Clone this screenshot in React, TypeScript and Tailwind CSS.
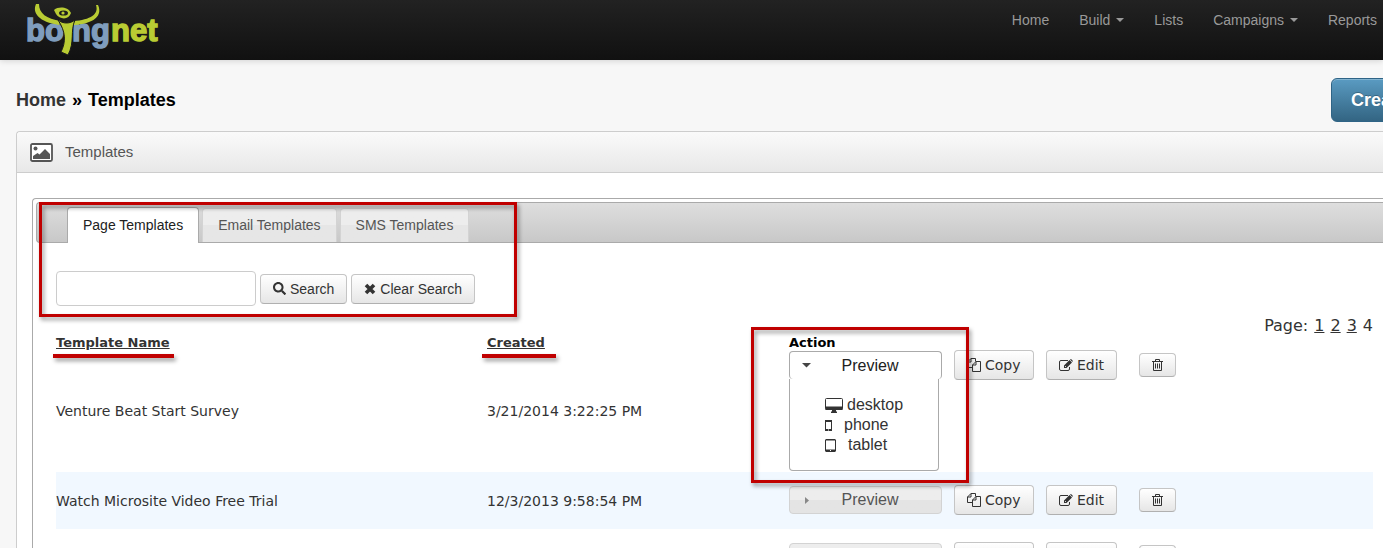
import { useState } from "react";
import type { ReactNode } from "react";
import { FaSearch } from "react-icons/fa";

// ─── Data ─────────────────────────────────────────────────────────────────────

const NAV = [
    { label: "Home", menu: false },
    { label: "Build", menu: true },
    { label: "Lists", menu: false },
    { label: "Campaigns", menu: true },
    { label: "Reports", menu: false },
];

const TABS = ["Page Templates", "Email Templates", "SMS Templates"];

const TEMPLATES = [
    { name: "Venture Beat Start Survey", created: "3/21/2014 3:22:25 PM" },
    { name: "Watch Microsite Video Free Trial", created: "12/3/2013 9:58:54 PM" },
    { name: "", created: "" },
];

// ─── Icons ────────────────────────────────────────────────────────────────────

function Logo() {
    return (
        <svg width="140" height="56" viewBox="0 0 140 56" role="img" aria-label="boingnet">
            <g fontFamily="'Liberation Sans', sans-serif" fontWeight="700" fontSize="31" strokeWidth="1.4">
                <text x="1" y="41" fill="#7f9dbd" stroke="#7f9dbd">bo</text>
                <text x="47" y="41" fill="#7f9dbd" stroke="#7f9dbd">ng</text>
                <text x="86" y="41" fill="#b9cc33" stroke="#b9cc33">net</text>
            </g>
            <g fill="#b9cc33">
                <path d="M11 4 C7 13 14 22 34 25 L36 21 C21 19 14 13 14 4 Z" />
                <path d="M71 5 C74 14 66 20 48 21 L46 25 C64 25 79 18 73 5 Z" />
                <path d="M33 20 C38 24 45 24 50 20 C45 31 50 42 43 55 L36 52 C41 42 41 32 33 20 Z" stroke="#1a1a1a" strokeWidth="1" />
                <path d="M29 10 C34 6 43 7 46 13 C44 20 35 20 31 14 Z" />
            </g>
            <ellipse cx="38.5" cy="13" rx="4.5" ry="2.6" fill="#1d1d1d" />
            <circle cx="38" cy="13" r="1.6" fill="#b9cc33" />
        </svg>
    );
}

function PictureIcon() {
    return (
        <svg width="23" height="19" viewBox="0 0 23 19" aria-hidden="true">
            <rect x="1" y="1" width="21" height="17" rx="1.5" fill="#fff" stroke="#555" strokeWidth="1.8" />
            <circle cx="5.5" cy="5.5" r="2" fill="#555" />
            <path d="M3 16 V13 L7.5 10 L9.5 11.5 L15 6 L20 11 V16 Z" fill="#555" />
        </svg>
    );
}

function CrossIcon() {
    return (
        <svg width="12" height="12" viewBox="0 0 12 12" aria-hidden="true">
            <path d="M2 2 L10 10 M10 2 L2 10" stroke="#333" strokeWidth="3.6" />
        </svg>
    );
}

function CopyIcon() {
    return (
        <svg width="14" height="14" viewBox="0 0 14 14" fill="none" stroke="#333" strokeWidth="1" aria-hidden="true">
            <path d="M5.5 9.5 H0.5 V4 L4 0.5 H8.5 V3.5 M4 0.5 V4 H0.5" />
            <path d="M5.5 13.5 V7 L9 3.5 H13.5 V13.5 Z M9 3.5 V7 H5.5" />
        </svg>
    );
}

function EditIcon() {
    return (
        <svg width="14" height="12" viewBox="0 0 14 12" aria-hidden="true">
            <path d="M9 1.5 H2 Q0.5 1.5 0.5 3 V10 Q0.5 11.5 2 11.5 H9 Q10.5 11.5 10.5 10 V8" fill="none" stroke="#333" />
            <path d="M5 9 V6.5 L10.5 1 L13 3.5 L7.5 9 Z M11 0.5 L12 0 L13.8 1.8 L13.4 3 Z" fill="#333" />
            <path d="M6 7 L7 8" stroke="#fff" strokeWidth="0.8" />
        </svg>
    );
}

function TrashIcon() {
    return (
        <svg width="11" height="12" viewBox="0 0 11 12" fill="none" stroke="#333" strokeWidth="1" aria-hidden="true">
            <path d="M0 2.5 H11 M3.5 2.5 V0.5 H7.5 V2.5 M1.5 2.5 V11.5 H9.5 V2.5 M3.5 4.5 V9.5 M5.5 4.5 V9.5 M7.5 4.5 V9.5" />
        </svg>
    );
}

function DesktopIcon() {
    return (
        <svg width="18" height="15" viewBox="0 0 18 15" aria-hidden="true">
            <rect x="0.5" y="0.5" width="17" height="11" rx="1" fill="#fff" stroke="#333" />
            <path d="M0.5 8.5 H17.5 V12 H11 V13 L12 14 V15 H6 V14 L7 13 V12 H0.5 Z" fill="#333" />
        </svg>
    );
}

function PhoneIcon() {
    return (
        <svg width="7" height="11" viewBox="0 0 7 11" aria-hidden="true">
            <path d="M0 0 H7 V11 H0 Z M1 2 V9 H6 V2 Z" fill="#333" fillRule="evenodd" />
            <rect x="3" y="9.5" width="1" height="1" fill="#fff" />
        </svg>
    );
}

function TabletIcon() {
    return (
        <svg width="11" height="13" viewBox="0 0 11 13" aria-hidden="true">
            <path d="M1 0 H10 L11 1 V12 L10 13 H1 L0 12 V1 Z M1 1.5 V10.5 H10 V1.5 Z" fill="#333" fillRule="evenodd" />
            <rect x="5" y="11" width="1" height="1" fill="#fff" />
        </svg>
    );
}

// ─── Pieces ───────────────────────────────────────────────────────────────────

const BTN = "inline-flex items-center justify-center rounded border border-[#c5c5c5] border-b-[#b0b0b0] bg-linear-to-b from-white to-[#e6e6e6] text-[#333]";

function TextButton({ children }: { children: ReactNode }) {
    return (
        <button type="button" className={`${BTN} h-[30px] gap-1 px-3`}>
            {children}
        </button>
    );
}

// Red markers laid over the page
const MARK = "pointer-events-none absolute h-1 bg-[#c00000] shadow-[2px_3px_4px_rgba(0,0,0,0.4)]";
const MARK_BOX = "pointer-events-none absolute border-3 border-[#c00000] drop-shadow-[2px_3px_2px_rgba(0,0,0,0.4)]";

function Preview({ open, onToggle }: { open: boolean; onToggle: () => void }) {
    return (
        <div className="w-[153px] font-['Liberation_Sans',sans-serif] text-base">
            <button type="button" onClick={onToggle} aria-expanded={open}
                className={open
                    ? "flex h-7 w-full items-center rounded border border-b-0 border-[#aaa] bg-white px-3 text-[#212121]"
                    : "flex h-7 w-full items-center rounded border border-[#d3d3d3] bg-linear-to-b from-[#ededed] from-50% to-[#e4e4e4] to-50% px-3 text-[#555]"}>
                <svg width="9" height="9" viewBox="0 0 9 9" aria-hidden="true">
                    {open
                        ? <path d="M0 2 H9 L4.5 6.5 Z" fill="#444" />
                        : <path d="M3 1 V8 L7 4.5 Z" fill="#888" />}
                </svg>
                <span className="flex-1 text-center">Preview</span>
            </button>
            {open && (
                <ul className="h-[92px] w-[150px] rounded-b border border-t-0 border-[#aaa] bg-white pt-4 pl-[35px] leading-5 text-[#333]">
                    <li className="flex items-center gap-1"><DesktopIcon />desktop</li>
                    <li className="flex items-center gap-3"><PhoneIcon />phone</li>
                    <li className="flex items-center gap-3"><TabletIcon />tablet</li>
                </ul>
            )}
        </div>
    );
}

function TemplateTable() {
    const [openRow, setOpenRow] = useState(0);

    return (
        <table className="w-full table-fixed border-collapse text-left text-sm">
            <colgroup>
                <col className="w-[431px]" />
                <col className="w-[302px]" />
                <col className="w-[165px]" />
                <col className="w-[92px]" />
                <col className="w-[93px]" />
                <col />
            </colgroup>
            <thead className="text-[13px] leading-[14px]">
                <tr>
                    <th className="p-0 pt-0.5"><a href="#name" className="underline">Template Name</a></th>
                    <th className="p-0 pt-0.5"><a href="#created" className="underline">Created</a></th>
                    <th className="p-0 pt-0.5 text-black">Action</th>
                    <th colSpan={3} className="p-0" />
                </tr>
            </thead>
            <tbody>
                {TEMPLATES.map((t, i) => {
                    const pad = i === 0 ? "p-0 align-top" : "px-0 pt-[13px] pb-3.5 align-top";
                    return (
                        <tr key={i} className={i % 2 ? "bg-[#f1f8ff]" : ""}>
                            <td className="p-0">{t.name}</td>
                            <td className="p-0">{t.created}</td>
                            <td className={pad}>
                                <div className="py-px">
                                    <Preview open={openRow === i} onToggle={() => setOpenRow(openRow === i ? -1 : i)} />
                                </div>
                            </td>
                            <td className={pad}><TextButton><CopyIcon />Copy</TextButton></td>
                            <td className={pad}><TextButton><EditIcon />Edit</TextButton></td>
                            <td className={pad}>
                                <div className="flex h-[30px] items-center">
                                    <button type="button" aria-label="Delete" className={`${BTN} h-6 w-[37px]`}><TrashIcon /></button>
                                </div>
                            </td>
                        </tr>
                    );
                })}
            </tbody>
        </table>
    );
}

// ─── Page ─────────────────────────────────────────────────────────────────────

export default function App() {
    const [tab, setTab] = useState(0);

    return (
        <div className="h-screen overflow-hidden bg-[#f7f7f7] font-['Liberation_Sans',sans-serif] text-[#333]">
            <header className="flex h-[60px] justify-between bg-linear-to-b from-[#222] to-[#111] pr-1.5 pl-[25px] shadow-[0_1px_6px_rgba(0,0,0,0.15)]">
                <a href="#home"><Logo /></a>
                <nav className="flex gap-[30px] pt-2.5 text-sm leading-5 text-[#999]">
                    {NAV.map((n) => (
                        <a key={n.label} href="#nav" className="flex h-5 items-center gap-1.5">
                            {n.label}
                            {n.menu && (
                                <svg width="8" height="4" viewBox="0 0 8 4" aria-hidden="true"><path d="M0 0 H8 L4 4 Z" fill="#999" /></svg>
                            )}
                        </a>
                    ))}
                </nav>
            </header>

            <div className="flex h-[71px] items-center justify-between pt-2 pl-4">
                <h1 className="flex gap-1.5 text-lg font-bold text-black">
                    <a href="#home" className="text-[#333]">Home</a>
                    <span>»</span>
                    <span>Templates</span>
                </h1>
                <button type="button"
                    className="-mr-11 h-11 shrink-0 rounded-md border border-[#2f6486] bg-linear-to-b from-[#5a9bc2] to-[#336583] px-[19px] text-lg font-bold text-white shadow-[inset_0_1px_0_rgba(255,255,255,0.25)] text-shadow-[0_-1px_0_rgba(0,0,0,0.25)]">
                    Create
                </button>
            </div>

            <section className="ml-4 rounded-tl border-t border-l border-[#cdcdcd] bg-white">
                <div className="flex h-[41px] items-center gap-3 rounded-tl border-b border-[#cdcdcd] bg-linear-to-b from-[#fafafa] to-[#e8e8e8] pl-[13px]">
                    <PictureIcon />
                    <h2 className="text-[15px] text-[#555]">Templates</h2>
                </div>

                <div className="relative mt-[25px] ml-[15px] rounded-tl border-t border-l border-[#aaa] pt-[3px] pl-[3px]">
                    <div role="tablist" className="flex h-[41px] items-end gap-[3px] rounded-l border border-r-0 border-[#aaa] bg-linear-to-b from-[#dedede] to-[#c8c8c8] pl-[30px] text-sm">
                        {TABS.map((t, i) => (
                            <button key={t} type="button" role="tab" aria-selected={tab === i} onClick={() => setTab(i)}
                                className={tab === i
                                    ? "-mb-px h-9 rounded-t border border-b-0 border-[#aaa] bg-white px-[15px] pb-0.5 text-[#212121]"
                                    : "h-[34px] rounded-t border border-b-0 border-[#d3d3d3] bg-linear-to-b from-[#ededed] from-50% to-[#e6e6e6] to-50% px-[15px] pb-0.5 text-[#555]"}>
                                {t}
                            </button>
                        ))}
                    </div>

                    <div className="pt-7 pr-2.5 pl-5">
                        <form className="flex items-center gap-1 text-sm" onSubmit={(e) => e.preventDefault()}>
                            <input type="text" aria-label="Search templates"
                                className="h-[35px] w-[200px] rounded border border-[#ccc] bg-white px-2 outline-none" />
                            <TextButton><FaSearch className="h-[13px] w-[13px]" />Search</TextButton>
                            <TextButton><CrossIcon />Clear Search</TextButton>
                        </form>

                        <div className="font-['DejaVu_Sans',sans-serif]">
                            <p className="flex justify-end gap-1.5 pt-2 text-base leading-6">
                                <span>Page:</span>
                                <a href="#1" className="underline">1</a>
                                <a href="#2" className="underline">2</a>
                                <a href="#3" className="underline">3</a>
                                <span>4</span>
                            </p>
                            <div className="relative -mt-1">
                                <TemplateTable />
                                <div className={`${MARK} top-5 left-[-3px] w-[121px]`} />
                                <div className={`${MARK} top-5 left-[426px] w-[74px]`} />
                                <div className={`${MARK_BOX} top-[-7px] left-[695px] h-[156px] w-[218px]`} />
                            </div>
                        </div>
                    </div>

                    <div className={`${MARK_BOX} top-[3px] left-[6px] h-[115px] w-[478px]`} />
                </div>
            </section>
        </div>
    );
}
